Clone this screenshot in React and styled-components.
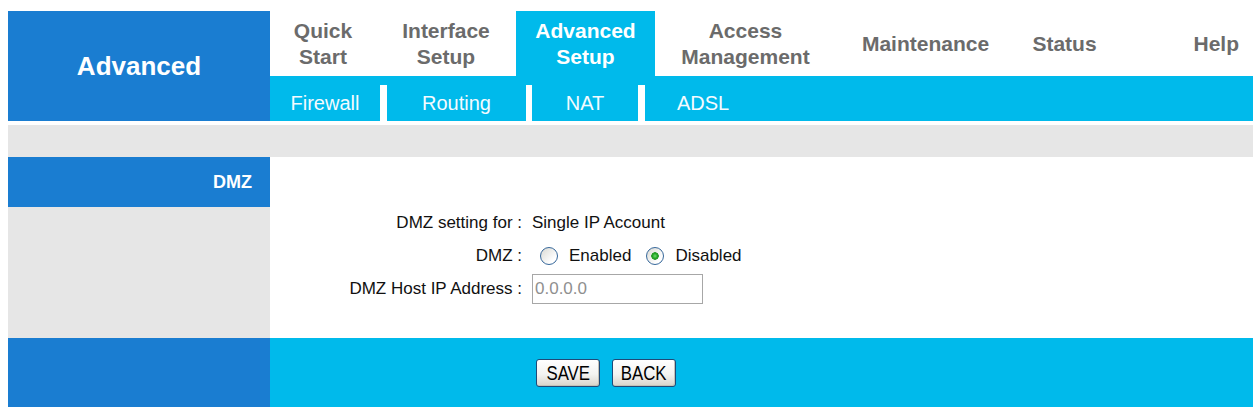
import React from 'react';
import styled, { createGlobalStyle } from 'styled-components';

const BLUE = '#1a7dd1';
const CYAN = '#00baeb';
const GREY = '#e6e6e6';

const GlobalStyle = createGlobalStyle`
  body {
    margin: 0;
    padding: 11px 6px 5px 8px;
    background: #fff;
    font-family: "Liberation Sans", Arial, sans-serif;
  }
`;

const Page = styled.div`
  width: 1245px;
`;

const Header = styled.div`
  display: grid;
  grid-template-columns: 262px 1fr;
  grid-template-rows: 65px 45px;
`;

const Title = styled.div`
  grid-row: 1 / span 2;
  display: flex;
  align-items: center;
  justify-content: center;
  background: ${BLUE};
  color: #fff;
  font-size: 26px;
  font-weight: bold;
`;

const Tabs = styled.div`
  display: flex;
`;

const Tab = styled.div`
  display: flex;
  align-items: center;
  justify-content: ${(p) => (p.$right ? 'flex-end' : 'center')};
  width: ${(p) => (p.$w ? `${p.$w}px` : 'auto')};
  flex: ${(p) => (p.$w ? 'none' : '1')};
  padding-right: ${(p) => (p.$right ? '14px' : '0')};
  background: ${(p) => (p.$active ? CYAN : 'transparent')};
  color: ${(p) => (p.$active ? '#fff' : '#6b6b6b')};
  font-size: 21px;
  font-weight: bold;
  line-height: 26px;
  text-align: center;
`;

const SubBar = styled.div`
  display: flex;
  padding-top: 9px;
  background: ${CYAN};
`;

const SubItem = styled.div`
  display: flex;
  align-items: center;
  justify-content: ${(p) => (p.$w ? 'center' : 'flex-start')};
  width: ${(p) => (p.$w ? `${p.$w}px` : 'auto')};
  flex: ${(p) => (p.$w ? 'none' : '1')};
  height: 36px;
  padding-left: ${(p) => (p.$w ? '0' : '32px')};
  border-left: ${(p) => (p.$sep ? `${p.$sep}px solid #fff` : 'none')};
  color: #f4fbff;
  font-size: 20px;
`;

const Band = styled.div`
  height: 32px;
  margin-top: 4px;
  background: ${GREY};
`;

const Content = styled.div`
  display: grid;
  grid-template-columns: 262px 1fr;
  grid-template-rows: 50px 131px 69px;
`;

const SideHead = styled.div`
  display: flex;
  align-items: center;
  justify-content: flex-end;
  padding-right: 18px;
  background: ${BLUE};
  color: #fff;
  font-size: 18px;
  font-weight: bold;
`;

const SideFill = styled.div`
  background: ${(p) => p.$bg};
`;

const Blank = styled.div``;

const Form = styled.div`
  display: flex;
  flex-direction: column;
  font-size: 17px;
  color: #111;
`;

const Row = styled.div`
  display: flex;
  align-items: center;
  height: ${(p) => p.$h}px;
`;

const Label = styled.div`
  width: 252px;
  margin-right: 10px;
  text-align: right;
  white-space: nowrap;
`;

const Radio = styled.input.attrs({ type: 'radio' })`
  appearance: none;
  width: 18px;
  height: 18px;
  margin: 0 11px 0 ${(p) => p.$ml}px;
  border: 1px solid #36679a;
  border-radius: 50%;
  background: linear-gradient(135deg, #d9d9d3, #ffffff 75%);

  &:checked {
    background:
      radial-gradient(circle at 50% 50%, #6fd96f 0, #22a522 2.5px, #2c9a2c 3.5px, transparent 4px),
      linear-gradient(135deg, #d9d9d3, #ffffff 75%);
  }
`;

const TextField = styled.input`
  box-sizing: border-box;
  width: 171px;
  height: 30px;
  padding: 0 2px;
  border: 1px solid #a7a7a7;
  font-family: "Liberation Sans", Arial, sans-serif;
  font-size: 17px;
  color: #8f8f8f;
`;

const Footer = styled.div`
  display: flex;
  align-items: center;
  gap: 12px;
  padding-left: 266px;
  background: ${CYAN};
`;

const Button = styled.button`
  width: 64px;
  height: 28px;
  padding: 0;
  border: 1px solid #1f4a78;
  border-radius: 3px;
  background: linear-gradient(180deg, #ffffff 0%, #f3f3f1 55%, #d8d4cb 100%);
  box-shadow: inset -1px -1px 0 #c6c2b6;
  color: #000;
  font-family: "Liberation Sans", Arial, sans-serif;
  font-size: 21px;
  line-height: 26px;
`;

const Caption = styled.span`
  display: inline-block;
  transform: scaleX(0.8);
`;

const tabs = [
  { w: 106, label: ['Quick', 'Start'] },
  { w: 140, label: ['Interface', 'Setup'] },
  { w: 139, label: ['Advanced', 'Setup'], active: true },
  { w: 181, label: ['Access', 'Management'] },
  { w: 179, label: ['Maintenance'] },
  { w: 99, label: ['Status'] },
];

const subs = [
  { w: 110, sep: 0, label: 'Firewall' },
  { w: 139, sep: 7, label: 'Routing' },
  { w: 106, sep: 6, label: 'NAT' },
  { w: 0, sep: 7, label: 'ADSL' },
];

export default function App() {
  return (
    <Page>
      <GlobalStyle />
      <Header>
        <Title>Advanced</Title>
        <Tabs>
          {tabs.map((t) => (
            <Tab key={t.label.join(' ')} $w={t.w} $active={t.active}>
              {t.label.map((line, i) => (
                <React.Fragment key={line}>
                  {i > 0 && <br />}
                  {line}
                </React.Fragment>
              ))}
            </Tab>
          ))}
          <Tab $right>Help</Tab>
        </Tabs>
        <SubBar>
          {subs.map((s) => (
            <SubItem key={s.label} $w={s.w} $sep={s.sep}>
              {s.label}
            </SubItem>
          ))}
        </SubBar>
      </Header>

      <Band />

      <Content>
        <SideHead>DMZ</SideHead>
        <Blank />
        <SideFill $bg={GREY} />
        <Form>
          <Row $h={31}>
            <Label>DMZ setting for :</Label>
            Single IP Account
          </Row>
          <Row $h={36}>
            <Label>DMZ :</Label>
            <Radio name="dmz" $ml={8} />
            Enabled
            <Radio name="dmz" $ml={15} defaultChecked />
            Disabled
          </Row>
          <Row $h={30}>
            <Label>DMZ Host IP Address :</Label>
            <TextField defaultValue="0.0.0.0" />
          </Row>
        </Form>
        <SideFill $bg={BLUE} />
        <Footer>
          <Button><Caption>SAVE</Caption></Button>
          <Button><Caption>BACK</Caption></Button>
        </Footer>
      </Content>
    </Page>
  );
}
